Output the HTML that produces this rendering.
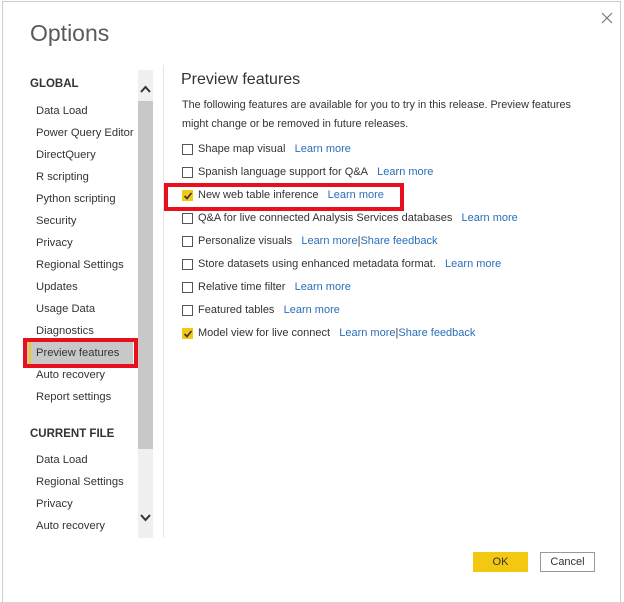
<!DOCTYPE html><html><head><style>
body{margin:0;width:624px;height:589px;background:#fff;position:relative;font-family:"Liberation Sans",sans-serif;overflow:hidden}
.a{position:absolute;white-space:nowrap}
.n{font-size:11.2px;color:#333;left:36px}
.cb{position:absolute;left:182px;width:9px;height:9px;border:1px solid #555;background:#fff}
.ck{background:#f2c811;border-color:#f2c811}
.r{font-size:11px;color:#333;left:198px}
.l{color:#2a6ebb}
.s{color:#333}
</style></head><body>
<div class="a" style="left:2px;top:1px;width:617px;height:600px;border:1px solid #ccc;border-bottom:none"></div>
<div class="a" style="left:30px;top:20px;font-size:23px;color:#5a5a5a">Options</div>
<svg class="a" style="left:601px;top:12px" width="12" height="12"><path d="M1 1L11 11M11 1L1 11" stroke="#777" stroke-width="1.2"/></svg>
<div class="a" style="left:30px;top:78px;font-size:11.5px;font-weight:bold;color:#333">GLOBAL</div>
<div class="a" style="left:27px;top:342px;width:106px;height:22px;background:#c8c8c8"></div>
<div class="a" style="left:29px;top:342px;width:2px;height:22px;background:#f2c811"></div>
<div class="a n" style="top:105px">Data Load</div>
<div class="a n" style="top:127px">Power Query Editor</div>
<div class="a n" style="top:149px">DirectQuery</div>
<div class="a n" style="top:171px">R scripting</div>
<div class="a n" style="top:193px">Python scripting</div>
<div class="a n" style="top:215px">Security</div>
<div class="a n" style="top:237px">Privacy</div>
<div class="a n" style="top:259px">Regional Settings</div>
<div class="a n" style="top:281px">Updates</div>
<div class="a n" style="top:303px">Usage Data</div>
<div class="a n" style="top:325px">Diagnostics</div>
<div class="a n" style="top:347px">Preview features</div>
<div class="a n" style="top:369px">Auto recovery</div>
<div class="a n" style="top:391px">Report settings</div>
<div class="a" style="left:30px;top:428px;font-size:11.5px;font-weight:bold;color:#333">CURRENT FILE</div>
<div class="a n" style="top:454px">Data Load</div>
<div class="a n" style="top:476px">Regional Settings</div>
<div class="a n" style="top:498px">Privacy</div>
<div class="a n" style="top:520px">Auto recovery</div>
<div class="a" style="left:23px;top:338px;width:107px;height:22px;border:4px solid #e8101c"></div>
<div class="a" style="left:138px;top:70px;width:15px;height:468px;background:#f0f0f0"></div>
<div class="a" style="left:138px;top:101px;width:15px;height:348px;background:#c8c8c8"></div>
<svg class="a" style="left:139px;top:84px" width="13" height="10"><path d="M2 8L6.5 3L11 8" stroke="#333" stroke-width="2" fill="none"/></svg>
<svg class="a" style="left:139px;top:513px" width="13" height="10"><path d="M2 2L6.5 7L11 2" stroke="#333" stroke-width="2" fill="none"/></svg>
<div class="a" style="left:163px;top:65px;width:1px;height:473px;background:#e6e6e6"></div>
<div class="a" style="left:181px;top:71px;font-size:16px;color:#333">Preview features</div>
<div class="a" style="left:182px;top:96px;font-size:10.8px;color:#333;line-height:18.5px">The following features are available for you to try in this release. Preview features<br>might change or be removed in future releases.</div>
<div class="cb" style="top:144px"></div><div class="a r" style="top:143px">Shape map visual&nbsp;&nbsp;&nbsp;<span class="l">Learn more</span></div>
<div class="cb" style="top:167px"></div><div class="a r" style="top:166px">Spanish language support for Q&amp;A&nbsp;&nbsp;&nbsp;<span class="l">Learn more</span></div>
<div class="cb ck" style="top:190px"></div><svg class="a" style="left:183px;top:191px" width="10" height="10"><path d="M1.5 5L4 7.5L8.5 2" stroke="#333" stroke-width="1.6" fill="none"/></svg><div class="a r" style="top:189px">New web table inference&nbsp;&nbsp;&nbsp;<span class="l">Learn more</span></div>
<div class="cb" style="top:213px"></div><div class="a r" style="top:212px">Q&amp;A for live connected Analysis Services databases&nbsp;&nbsp;&nbsp;<span class="l">Learn more</span></div>
<div class="cb" style="top:236px"></div><div class="a r" style="top:235px">Personalize visuals&nbsp;&nbsp;&nbsp;<span class="l">Learn more</span><span class="s">|</span><span class="l">Share feedback</span></div>
<div class="cb" style="top:259px"></div><div class="a r" style="top:258px">Store datasets using enhanced metadata format.&nbsp;&nbsp;&nbsp;<span class="l">Learn more</span></div>
<div class="cb" style="top:282px"></div><div class="a r" style="top:281px">Relative time filter&nbsp;&nbsp;&nbsp;<span class="l">Learn more</span></div>
<div class="cb" style="top:305px"></div><div class="a r" style="top:304px">Featured tables&nbsp;&nbsp;&nbsp;<span class="l">Learn more</span></div>
<div class="cb ck" style="top:328px"></div><svg class="a" style="left:183px;top:329px" width="10" height="10"><path d="M1.5 5L4 7.5L8.5 2" stroke="#333" stroke-width="1.6" fill="none"/></svg><div class="a r" style="top:327px">Model view for live connect&nbsp;&nbsp;&nbsp;<span class="l">Learn more</span><span class="s">|</span><span class="l">Share feedback</span></div>
<div class="a" style="left:164px;top:183px;width:232px;height:20px;border:4px solid #e8101c"></div>
<div class="a" style="left:473px;top:552px;width:55px;height:20px;background:#f2c811;font-size:11px;color:#333;text-align:center;line-height:20px">OK</div>
<div class="a" style="left:540px;top:552px;width:53px;height:18px;border:1px solid #999;font-size:11px;color:#333;text-align:center;line-height:18px">Cancel</div>
</body></html>
